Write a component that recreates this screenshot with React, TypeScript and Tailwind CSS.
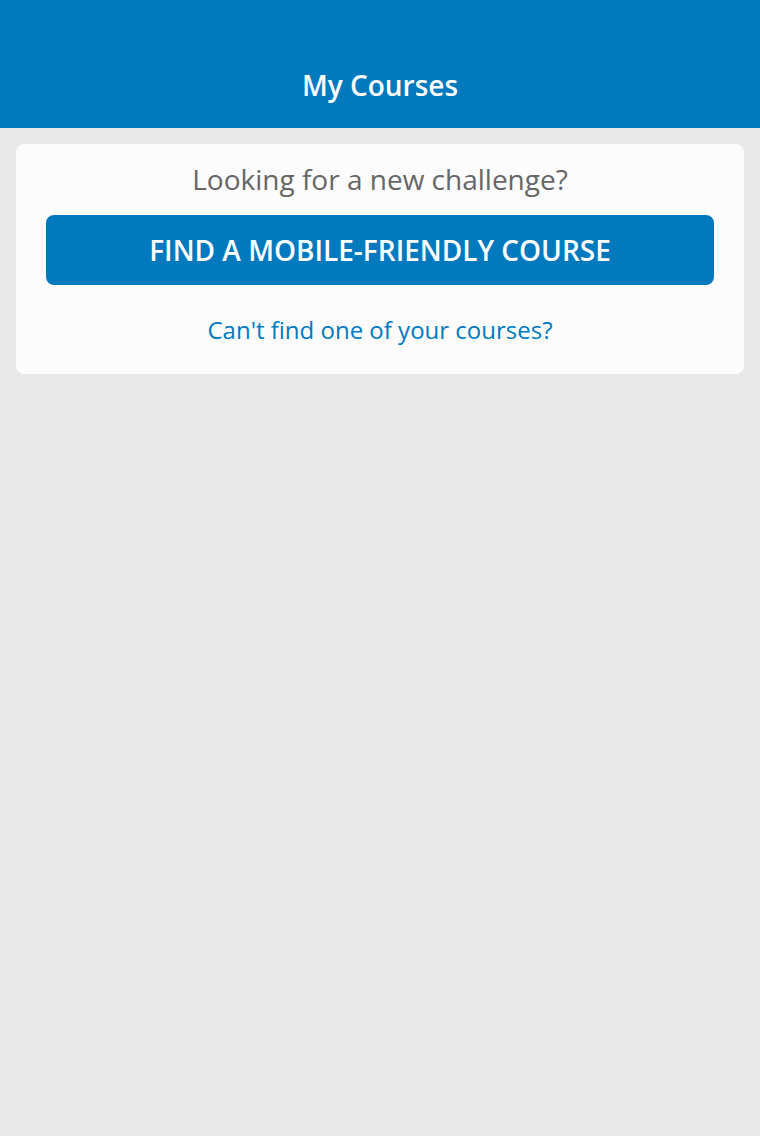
export default function App() {
  return (
    <div
      className="min-h-[1136px] bg-[#e8e8e8]"
      style={{ fontFamily: '"Open Sans", sans-serif' }}
    >
      <header className="h-[128px] bg-[#0079be] flex items-end justify-center pb-[25px]">
        <h1 className="text-white text-[28px] font-semibold leading-[36px]">My Courses</h1>
      </header>

      <div className="p-4">
        <div className="bg-[#fcfcfc] rounded-[8px] px-[30px] pt-[15px] pb-[25px] flex flex-col items-center">
          <p className="text-[#666666] text-[28px] leading-[40px]">Looking for a new challenge?</p>
          <button className="mt-[16px] w-full h-[70px] rounded-[8px] bg-[#0079be] text-white text-[28px] font-semibold uppercase">
            Find a mobile-friendly course
          </button>
          <a className="mt-[26px] text-[#0079be] text-[24px] leading-[38px]">
            Can't find one of your courses?
          </a>
        </div>
      </div>
    </div>
  );
}
